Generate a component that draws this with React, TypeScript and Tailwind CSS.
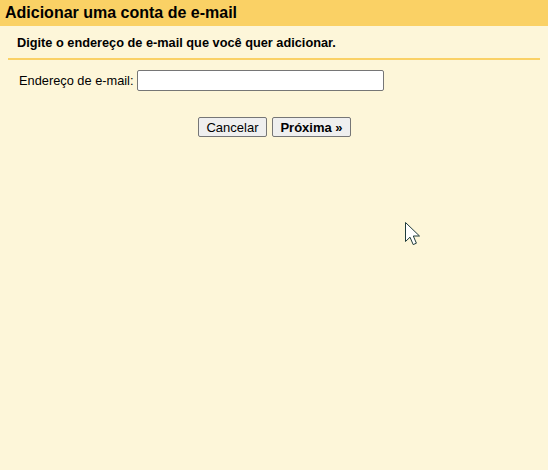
import React from "react";

const Cursor = () => (
  <svg
    className="absolute left-[404px] top-[221px]"
    width="20"
    height="28"
    viewBox="0 0 20 28"
  >
    <path
      d="M1.5 1.5 L1.5 20.5 L6 16.2 L9.2 23.6 L12.4 22.2 L9.3 15 L15.5 15 Z"
      fill="#ffffff"
      stroke="#1f3b3b"
      strokeWidth="1"
      strokeLinejoin="miter"
    />
  </svg>
);

export default function App() {
  return (
    <div className="relative h-[470px] w-[548px] bg-[#fdf6d9] font-['Liberation_Sans',Arial,sans-serif] text-black">
      <div className="flex h-[26px] items-center bg-[#fad165] px-[5px]">
        <h1 className="text-[16px] font-bold">Adicionar uma conta de e-mail</h1>
      </div>
      <div className="mx-[8px] border-b-2 border-[#fad165] pb-[7px] pl-[9px] pt-[9px] text-[12.75px] font-bold leading-[16px]">
        Digite o endereço de e-mail que você quer adicionar.
      </div>
      <form className="flex flex-col" onSubmit={(e) => e.preventDefault()}>
        <div className="flex items-center gap-[4px] pl-[19px] pt-[10px]">
          <label className="w-[114px] whitespace-nowrap text-[12.8px]">
            Endereço de e-mail:
          </label>
          <input
            type="text"
            className="h-[21px] w-[247px] rounded-[2px] border border-[#767676] bg-white"
          />
        </div>
        <div className="flex justify-center gap-[5px] pt-[26px] pl-[1px]">
          <button
            type="button"
            className="h-[20px] w-[69px] rounded-[2px] border border-[#767676] bg-[#efefef] text-[13px]"
          >
            Cancelar
          </button>
          <button
            type="submit"
            className="h-[20px] w-[79px] rounded-[2px] border border-[#767676] bg-[#efefef] text-[13px] font-bold"
          >
            Próxima »
          </button>
        </div>
      </form>
      <Cursor />
    </div>
  );
}
